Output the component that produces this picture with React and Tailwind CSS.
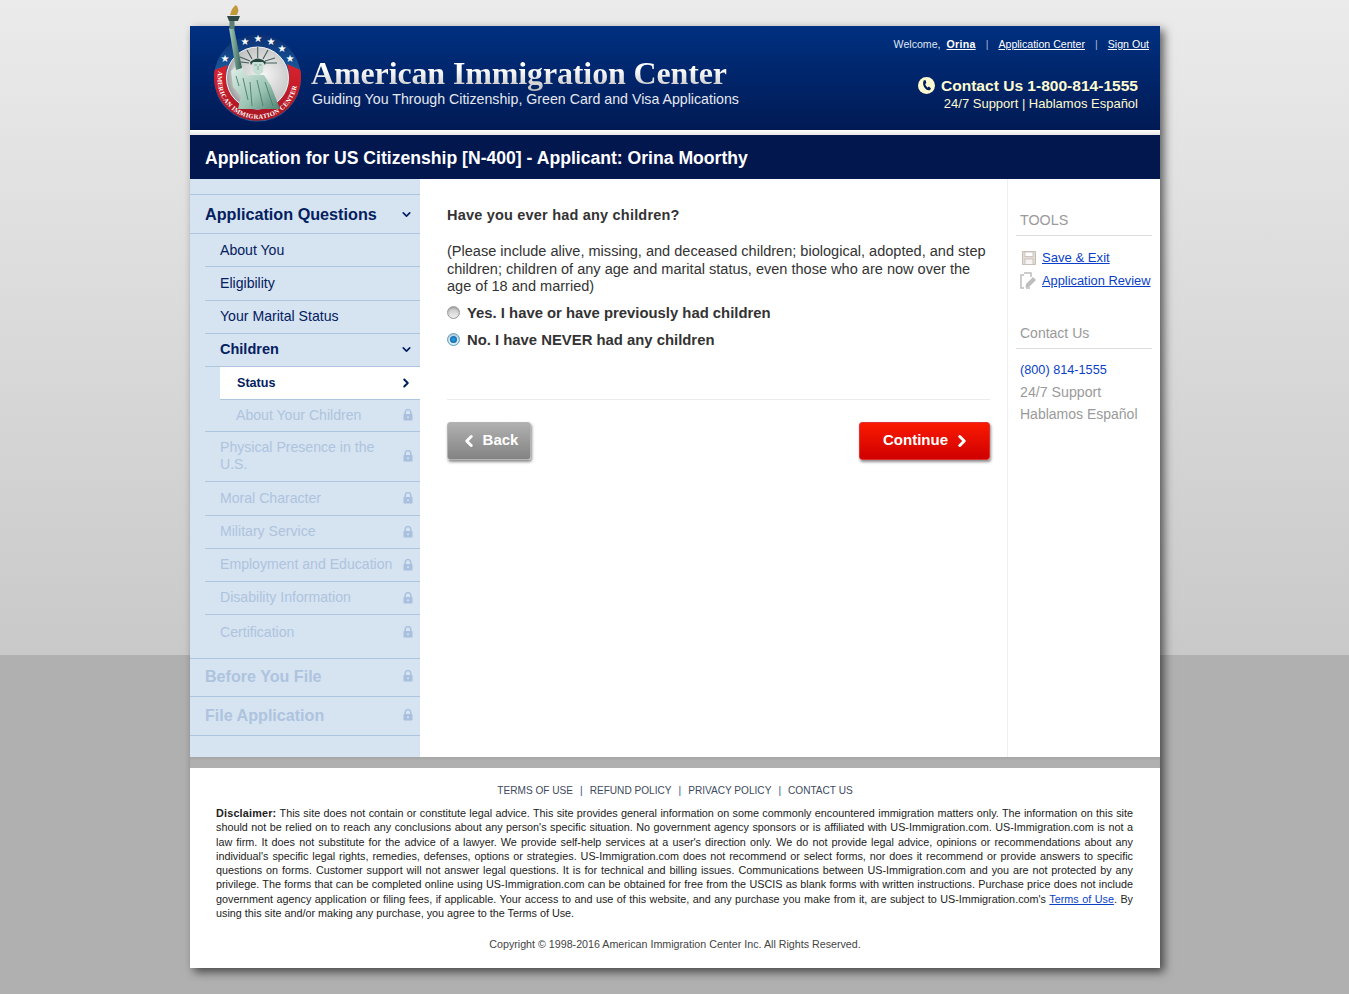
import { ChevronDown, ChevronRight, ChevronLeft } from 'lucide-react'

const lockedItems = [
  { label: 'Moral Character', height: 'h-[34px]' },
  { label: 'Military Service', height: 'h-[33px]' },
  { label: 'Employment and Education', height: 'h-[33px]' },
  { label: 'Disability Information', height: 'h-[33px]' },
]

const disclaimer = [
  "should not be relied on to reach any conclusions about any person's specific situation. No government agency sponsors or is affiliated with US-Immigration.com. US-Immigration.com is not a",
  "law firm. It does not substitute for the advice of a lawyer. We provide self-help services at a user's direction only. We do not provide legal advice, opinions or recommendations about any",
  "individual's specific legal rights, remedies, defenses, options or strategies. US-Immigration.com does not recommend or select forms, nor does it recommend or provide answers to specific",
  'questions on forms. Customer support will not answer legal questions. It is for technical and billing issues. Communications between US-Immigration.com and you are not protected by any',
  'privilege. The forms that can be completed online using US-Immigration.com can be obtained for free from the USCIS as blank forms with written instructions. Purchase price does not include',
]

function Lock() {
  return (
    <svg width="10" height="12" viewBox="0 0 10 12" className="shrink-0">
      <path d="M2.2 5V3.4a2.8 2.8 0 0 1 5.6 0V5" fill="none" stroke="#a9c0de" strokeWidth="1.5" />
      <rect x="0.5" y="5" width="9" height="6.5" rx="0.8" fill="#a9c0de" />
      <circle cx="5" cy="8.2" r="1" fill="#d6e3f1" />
    </svg>
  )
}

function Logo() {
  const stars = [[20, 59], [40, 42], [53, 39], [66, 42], [77, 49], [85, 59]]
  return (
    <svg width="110" height="130" viewBox="0 0 110 130" className="absolute left-[15px] top-[-26px]">
      <defs>
        <linearGradient id="blueRing" x1="0" y1="0" x2="0" y2="1">
          <stop offset="0" stopColor="#0c2f73" />
          <stop offset="0.5" stopColor="#1b62a3" />
        </linearGradient>
        <linearGradient id="redRing" x1="0" y1="0" x2="0" y2="1">
          <stop offset="0" stopColor="#d9232e" />
          <stop offset="1" stopColor="#a81522" />
        </linearGradient>
        <radialGradient id="inner" cx="0.6" cy="0.45" r="0.7">
          <stop offset="0" stopColor="#f5f5f5" />
          <stop offset="0.7" stopColor="#c4c4c4" />
          <stop offset="1" stopColor="#767676" />
        </radialGradient>
        <linearGradient id="robe" x1="0" y1="0" x2="1" y2="1">
          <stop offset="0" stopColor="#e4f1eb" />
          <stop offset="0.6" stopColor="#9cc5b4" />
          <stop offset="1" stopColor="#4d8272" />
        </linearGradient>
        <linearGradient id="armFill" x1="0" y1="0" x2="1" y2="0">
          <stop offset="0" stopColor="#a7cdbd" />
          <stop offset="1" stopColor="#2f5f54" />
        </linearGradient>
        <clipPath id="innerClip">
          <path d="M0 0H110V109H0Z" />
        </clipPath>
      </defs>
      <circle cx="52.5" cy="78" r="43.5" fill="url(#blueRing)" />
      <path d="M9.6 70a43.5 43.5 0 1 0 85.8 0L82 64a32 32 0 0 1 2 14a31.5 31.5 0 0 1-63 0a32 32 0 0 1 1.6-13Z" fill="url(#redRing)" />
      <circle cx="52.5" cy="78" r="31" fill="url(#inner)" stroke="#f3f3f3" strokeWidth="1" />
      {stars.map(([x, y]) => (
        <text key={x} x={x} y={y + 3} textAnchor="middle" fontSize="10" fill="#fff" fontFamily="'DejaVu Sans', sans-serif">★</text>
      ))}
      <path id="ringArc" d="M13.5 70a40 40 0 1 0 78 0" fill="none" />
      <text fontSize="6.6" fontWeight="700" fill="#fff" fontFamily="'Liberation Serif', serif">
        <textPath href="#ringArc" startOffset="1" textLength="126" lengthAdjust="spacing">AMERICAN IMMIGRATION CENTER</textPath>
      </text>
      <g clipPath="url(#innerClip)">
        <path d="M52.7 58 V47 M47 59 L42 50 M58 59 L63 50 M45 61 L35 57 M60 61 L70 58 M44 63 L36 62 M61 63 L72 63" stroke="#3f5f57" strokeWidth="1.1" />
        <path d="M26 71 L33 64 L37 66 L42 76 L47 75 L59 75 L66 86 L75 109 L33 109 L36 96 L28 87 Z" fill="url(#robe)" />
        <path d="M24 28 L29 28 L37 68 L31 70 Z" fill="url(#armFill)" />
        <path d="M47.5 63 Q48 60 53 60 Q58 60 58.5 63 L58 72 L53 76 L48.5 72 Z" fill="#c6dfd5" />
        <path d="M45 62 Q53 55 61 62 L60 65 L58 62 L48 62 L46 65 Z" fill="#25443d" />
        <path d="M53 66 V70 M49.5 65 H52 M54 65 H56.5" stroke="#5b8174" strokeWidth="0.7" />
        <path d="M31 76 L34 86 M38 78 L43 100 M45 82 L47 106 M52 80 L58 106 M60 82 L68 106" stroke="#4a7a6c" strokeWidth="0.9" />
      </g>
      <path d="M22 16 L35 16 L33 21 L24 21 Z" fill="#2f4a45" />
      <rect x="24.5" y="21" width="5" height="8" fill="#5b7d73" />
      <path d="M25 15 Q27 7 31 5 Q35 9 32 15 Z" fill="#c39a3a" />
    </svg>
  )
}

function PhoneBadge() {
  return (
    <svg width="17" height="17" viewBox="0 0 17 17" className="shrink-0">
      <circle cx="8.5" cy="8.5" r="8.5" fill="#fffbd0" />
      <path d="M5.6 3.4 L7.5 3 L8.4 6 L7.2 7 Q7.6 9 9.4 10.4 L11 9.6 L13 11.6 L11.8 13.2 Q9 14 6.6 10.8 Q4.2 7.2 5.6 3.4 Z" fill="#00205f" />
    </svg>
  )
}

function SaveIcon() {
  return (
    <svg width="14" height="14" viewBox="0 0 14 14" className="shrink-0">
      <path d="M0.5 0.5H13.5V13.5H0.5Z" fill="#e2dcd6" stroke="#c6bdb5" />
      <rect x="3" y="1" width="8" height="4.5" fill="#fff" stroke="#c6bdb5" strokeWidth="0.8" />
      <rect x="3" y="8" width="8" height="5.5" fill="#f6f4f2" stroke="#c6bdb5" strokeWidth="0.8" />
    </svg>
  )
}

function ReviewIcon() {
  return (
    <svg width="17" height="17" viewBox="0 0 17 17" className="shrink-0">
      <path d="M4 3H1V16H4M4 1H11V5M10 16H6" fill="none" stroke="#bdbdbd" strokeWidth="1.5" />
      <path d="M6 12 L13 5 L16 8 L9 15 L5.5 15.5 Z" fill="#bdbdbd" />
    </svg>
  )
}

function Radio({ checked }) {
  return (
    <span className={`flex h-[13px] w-[13px] shrink-0 items-center justify-center rounded-full border shadow-[inset_0_1px_2px_rgba(0,0,0,0.25)] ${checked ? 'border-[#5f9fc4] bg-[#d8edf8]' : 'border-[#9a9a9a] bg-[linear-gradient(#c4c4c4,#f0f0f0)]'}`}>
      {checked && <span className="h-[7px] w-[7px] rounded-full bg-[radial-gradient(circle,#2ba4e6,#0a4f93)]" />}
    </span>
  )
}

function Sidebar() {
  const rowLine = 'border-b border-[#aec5e0]'
  const lockedText = 'text-[14.1px] text-[#aec3de]'
  return (
    <aside className="w-[230px] shrink-0 bg-[#d6e3f1] pt-[15px]">
      <div className={`flex h-[40px] items-center border-t border-[#aec5e0] pl-[15px] pr-[7px] ${rowLine}`}>
        <span className="flex-1 text-[16.2px] font-bold text-[#03205f]">Application Questions</span>
        <ChevronDown size={13} strokeWidth={3} className="text-[#03205f]" />
      </div>
      <div className="ml-[15px]">
        {['About You', 'Eligibility', 'Your Marital Status'].map((label) => (
          <div key={label} className={`flex h-[33.3px] items-center pl-[15px] text-[14.1px] text-[#03205f] ${rowLine}`}>{label}</div>
        ))}
        <div className={`flex h-[33px] items-center pl-[15px] pr-[7px] ${rowLine}`}>
          <span className="flex-1 text-[14.5px] font-bold text-[#03205f]">Children</span>
          <ChevronDown size={13} strokeWidth={3} className="text-[#03205f]" />
        </div>
        <div className="ml-[15px] flex h-[33px] items-center border-b border-[#aec5e0] bg-white pl-[17px] pr-[7px] pt-[1px]">
          <span className="flex-1 text-[12.6px] font-bold text-[#03205f]">Status</span>
          <ChevronRight size={14} strokeWidth={3.5} className="text-[#03205f]" />
        </div>
        <div className={`flex h-[32px] items-center pl-[31px] pr-[7px] ${rowLine}`}>
          <span className={`flex-1 ${lockedText}`}>About Your Children</span>
          <Lock />
        </div>
        <div className={`flex h-[50px] items-center pl-[15px] pr-[7px] ${rowLine}`}>
          <span className={`flex-1 pr-[10px] leading-[17px] ${lockedText}`}>Physical Presence in the U.S.</span>
          <Lock />
        </div>
        {lockedItems.map(({ label, height }) => (
          <div key={label} className={`flex items-center pl-[15px] pr-[7px] ${height} ${rowLine}`}>
            <span className={`flex-1 ${lockedText}`}>{label}</span>
            <Lock />
          </div>
        ))}
        <div className="flex h-[35px] items-center pl-[15px] pr-[7px]">
          <span className={`flex-1 ${lockedText}`}>Certification</span>
          <Lock />
        </div>
      </div>
      <div className={`mt-[8px] flex h-[39px] items-center border-t border-[#aec5e0] pb-[2px] pl-[15px] pr-[7px] ${rowLine}`}>
        <span className="flex-1 text-[16.1px] font-bold text-[#aec3de]">Before You File</span>
        <Lock />
      </div>
      <div className={`flex h-[39px] items-center pb-[2px] pl-[15px] pr-[7px] ${rowLine}`}>
        <span className="flex-1 text-[16.1px] font-bold text-[#aec3de]">File Application</span>
        <Lock />
      </div>
    </aside>
  )
}

function Tools() {
  return (
    <aside className="w-[153px] shrink-0 border-l border-[#efefef] pl-[8px] pr-[8px] pt-[31px] text-[14px]">
      <div className="h-[26px] border-b border-[#dcdcdc] pl-[4px] text-[14.3px] text-[#9a9a9a]">TOOLS</div>
      <div className="mt-[13px] flex items-center gap-[6px] pl-[6px] text-[13.1px] leading-[17px] text-[#0a3fc8] underline"><SaveIcon /><span>Save &amp; Exit</span></div>
      <div className="mt-[6px] flex items-center gap-[5px] pl-[4px] text-[12.85px] leading-[17px] text-[#0a3fc8] underline"><ReviewIcon /><span className="whitespace-nowrap">Application Review</span></div>
      <div className="mt-[34px] h-[26px] border-b border-[#dcdcdc] pl-[4px] text-[#9a9a9a]">Contact Us</div>
      <div className="mt-[9px] pl-[4px] leading-[22px]">
        <div className="pt-[1px] text-[12.7px] text-[#0a3fc8]">(800) 814-1555</div>
        <div className="text-[14.2px] text-[#9a9a9a]">24/7 Support</div>
        <div className="whitespace-nowrap text-[#9a9a9a]">Hablamos Español</div>
      </div>
    </aside>
  )
}

export default function App() {
  return (
    <div className="min-h-[994px] bg-[linear-gradient(#ebebeb_0,#c9c9c9_655px,#b0b0b0_655px)] pt-[26px] font-['Liberation_Sans',Arial,sans-serif]">
      <div className="ml-[190px] w-[970px] bg-[#b0b0b0] shadow-[4px_4px_9px_rgba(0,0,0,0.6)]">
        <header className="relative flex h-[104px] justify-between bg-[linear-gradient(#003080,#011a54)]">
          <Logo />
          <div className="pl-[122px] pt-[28px] text-white">
            <div className="-ml-[1px] bg-[linear-gradient(#fff_40%,#b9b9b9)] bg-clip-text font-['Liberation_Serif',serif] text-[32px] font-bold leading-[38px] tracking-[-0.13px] text-transparent">American Immigration Center</div>
            <div className="text-[14.2px] leading-[15px] text-[#e4e8f0]">Guiding You Through Citizenship, Green Card and Visa Applications</div>
          </div>
          <div className="flex flex-col items-end pr-[11px] pt-[11px]">
            <div className="flex items-center text-[10.6px] text-[#dfe6f3]">
              <span>Welcome,</span>
              <span className="ml-[6px] font-bold tracking-[0.3px] text-white underline">Orina</span>
              <span className="mx-[10px] text-[#aab6d0]">|</span>
              <span className="text-white underline">Application Center</span>
              <span className="mx-[10px] text-[#aab6d0]">|</span>
              <span className="text-white underline">Sign Out</span>
            </div>
            <div className="mr-[11px] mt-[23px] flex items-center gap-[6px] text-[15.55px] font-bold leading-[20px] text-[#fffbd0]"><PhoneBadge />Contact Us 1-800-814-1555</div>
            <div className="mr-[11px] text-[13px] leading-[15px] text-[#fffbd0]">24/7 Support | Hablamos Español</div>
          </div>
        </header>
        <div className="h-[5px] bg-[linear-gradient(#fff,#e6e6e6)]" />
        <div className="flex h-[44px] items-center bg-[#03174f] pl-[15px] pt-[2px] text-[17.6px] font-bold text-white">Application for US Citizenship [N-400] - Applicant: Orina Moorthy</div>
        <div className="flex h-[578px] bg-white">
          <Sidebar />
          <main className="flex-1 pl-[27px] pr-[17px] pt-[27px] text-[#333]">
            <h1 className="text-[14.5px] font-bold leading-[18px] tracking-[0.2px]">Have you ever had any children?</h1>
            <p className="mt-[19px] text-[14.55px] leading-[17.5px]">(Please include alive, missing, and deceased children; biological, adopted, and step children; children of any age and marital status, even those who are now over the age of 18 and married)</p>
            <div className="mt-[8px] flex items-center gap-[7px] text-[14.85px] font-bold leading-[18px]"><Radio /><span>Yes. I have or have previously had children</span></div>
            <div className="mt-[9px] flex items-center gap-[7px] text-[14.85px] font-bold leading-[18px]"><Radio checked /><span>No. I have NEVER had any children</span></div>
            <div className="mt-[50px] border-t border-[#ececec]" />
            <div className="mt-[22px] flex justify-between">
              <button className="flex h-[38px] w-[84px] items-center justify-center gap-[5px] rounded-[3px] border border-[#b4b4b4] bg-[linear-gradient(#b0b0b0,#838383)] text-[15px] font-bold text-white shadow-[1px_2px_3px_rgba(0,0,0,0.45)]">
                <ChevronLeft size={18} strokeWidth={4} />Back
              </button>
              <button className="flex h-[38px] w-[131px] items-center justify-center gap-[5px] rounded-[3px] border border-[#e03030] bg-[linear-gradient(#fa1a00,#cf0000)] pl-[5px] text-[15px] font-bold text-white shadow-[1px_2px_3px_rgba(0,0,0,0.45)]">
                Continue<ChevronRight size={18} strokeWidth={4} />
              </button>
            </div>
          </main>
          <Tools />
        </div>
        <div className="h-[11px] shadow-[inset_0_2px_2px_rgba(0,0,0,0.05)]" />
        <footer className="h-[200px] bg-white pt-[15px]">
          <div className="flex justify-center pt-[1px] text-[10.1px] leading-[14px] text-[#3e4a60]">
            <span>TERMS OF USE</span><span className="mx-[7px] text-[#32507f]">|</span>
            <span>REFUND POLICY</span><span className="mx-[7px] text-[#32507f]">|</span>
            <span>PRIVACY POLICY</span><span className="mx-[7px] text-[#32507f]">|</span>
            <span>CONTACT US</span>
          </div>
          <div className="mx-[26px] mt-[8px] w-[917px] text-[10.8px] leading-[14.3px] text-[#222]">
            <div className="[text-align-last:justify]"><b className="tracking-[0.2px]">Disclaimer:</b> This site does not contain or constitute legal advice. This site provides general information on some commonly encountered immigration matters only. The information on this site</div>
            {disclaimer.map((line) => (
              <div key={line} className="[text-align-last:justify]">{line}</div>
            ))}
            <div className="[text-align-last:justify]">government agency application or filing fees, if applicable. Your access to and use of this website, and any purchase you make from it, are subject to US-Immigration.com's <span className="text-[#0a3fc8] underline">Terms of Use</span>. By</div>
            <div>using this site and/or making any purchase, you agree to the Terms of Use.</div>
          </div>
          <div className="mt-[17px] text-center text-[10.7px] leading-[14px] text-[#444]">Copyright © 1998-2016 American Immigration Center Inc. All Rights Reserved.</div>
        </footer>
      </div>
    </div>
  )
}
